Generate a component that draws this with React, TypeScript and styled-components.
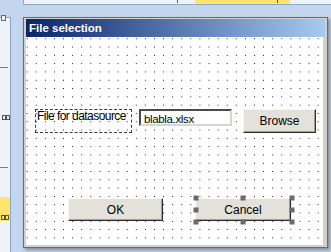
import React from "react";
import styled, { createGlobalStyle } from "styled-components";

const Global = createGlobalStyle`
  html, body { margin: 0; padding: 0; overflow: hidden; }
  body { font-family: "Liberation Sans", Arial, sans-serif; background: #c4d6ee; }
`;

const Page = styled.div`
  width: 331px;
  height: 252px;
  display: grid;
  grid-template-columns: 11px 12px 305px 3px;
  grid-template-rows: 5px 12px 231px 4px;
  background: #c4d6ee;
`;

const TopStrip = styled.div`
  grid-column: 3 / 5;
  grid-row: 1;
  box-sizing: border-box;
  background: #eef3fa;
  border-left: 1px solid #8ea6ca;
  border-bottom: 1px solid #8ea6ca;
  display: flex;
  align-items: stretch;
`;

const Tick = styled.div<{ $ml: number }>`
  width: 1px;
  height: 3px;
  margin-left: ${(p) => p.$ml}px;
  background: #5a5a5a;
`;

const YellowTab = styled.div`
  width: 95px;
  margin-left: 17px;
  background: #ffe46e;
  display: flex;
`;

const LeftStrip = styled.div`
  grid-column: 1;
  grid-row: 3 / 5;
  position: relative;
  box-sizing: border-box;
  background: #eef3fa;
  border-top: 1px solid #8ea6ca;
  border-right: 1px solid #8ea6ca;
  display: flex;
  flex-direction: column;
`;

const TopMarker = styled.div`
  position: absolute;
  left: 1px;
  top: -3px;
  width: 3px;
  height: 4px;
  border: 1px solid #6a6a6a;
  background: #eef3fa;
`;

const Rule = styled.div<{ $mt: number }>`
  margin-top: ${(p) => p.$mt}px;
  width: 8px;
  height: 1px;
  background: #6f7f98;
`;

const GlyphRow = styled.div<{ $mt: number }>`
  margin-top: ${(p) => p.$mt}px;
  padding-left: 2px;
  height: 5px;
  display: flex;
`;

const YellowBlock = styled.div`
  margin-top: 29px;
  height: 24px;
  background: #ffe46e;
  display: flex;
  align-items: flex-end;
  padding: 0 0 1px 1px;
  box-sizing: border-box;
`;

const Window = styled.div`
  grid-column: 3;
  grid-row: 3;
  box-sizing: border-box;
  border: 1px solid #6b6b6b;
  padding: 1px 2px 2px 2px;
  background: #d4d0c8;
  box-shadow: 2px 2px 3px rgba(0, 0, 0, 0.35);
  display: flex;
  flex-direction: column;
`;

const TitleBar = styled.div`
  height: 18px;
  flex: none;
  background: linear-gradient(to right, #0a246a, #a6caf0);
  color: #fff;
  font-weight: bold;
  font-size: 11.5px;
  line-height: 18px;
  padding-left: 3px;
  white-space: nowrap;
`;

const Canvas = styled.div`
  flex: 1;
  box-sizing: border-box;
  background-color: #ffffff;
  background-image: radial-gradient(circle at 0.5px 0.5px, #000 0.55px, transparent 0.7px);
  background-size: 9.1px 8.3px;
  background-position: 0.7px 1.3px;
  border-right: 2px solid #d4d0c8;
  padding: 72px 0 0 9px;
  display: flex;
  flex-direction: column;
`;

const Row = styled.div<{ $mt?: number; $pl?: number; $gap: number }>`
  display: flex;
  align-items: flex-start;
  margin-top: ${(p) => p.$mt ?? 0}px;
  padding-left: ${(p) => p.$pl ?? 0}px;
  column-gap: ${(p) => p.$gap}px;
`;

const Label = styled.div`
  box-sizing: border-box;
  width: 97px;
  height: 24px;
  border: 1px dashed #3a3a3a;
  padding: 0 0 0 1px;
  font-size: 12px;
  line-height: 13px;
  letter-spacing: -0.55px;
  color: #000;
  white-space: nowrap;
`;

const TextBox = styled.div`
  box-sizing: border-box;
  width: 93px;
  height: 17px;
  margin-right: 4px;
  background: #fff;
  border-top: 2px solid #4a4a4a;
  border-left: 2px solid #4a4a4a;
  border-right: 2px solid #d8d6d0;
  border-bottom: 2px solid #d8d6d0;
  padding: 2px 0 0 3px;
  font-size: 11.5px;
  line-height: 12px;
  letter-spacing: -0.35px;
  color: #000;
  white-space: nowrap;
  overflow: hidden;
`;

const Button = styled.div<{ $w: number; $h: number }>`
  box-sizing: border-box;
  width: ${(p) => p.$w}px;
  height: ${(p) => p.$h}px;
  background: #e2e1da;
  border-top: 1px solid #f8f8f4;
  border-left: 1px solid #f8f8f4;
  border-right: 1px solid #2e2e2e;
  border-bottom: 1px solid #2e2e2e;
  box-shadow: inset -1px -1px 0 #a09f98;
  display: flex;
  align-items: center;
  justify-content: center;
  font-size: 12px;
  color: #000;
`;

const Selected = styled.div`
  position: relative;
`;

const Handle = styled.div<{ $x: string; $y: string }>`
  position: absolute;
  width: 5px;
  height: 5px;
  background: #6a6a6a;
  left: ${(p) => p.$x};
  top: ${(p) => p.$y};
  transform: translate(-50%, -50%);
`;

const Glyph = () => (
  <svg width="8" height="5" viewBox="0 0 8 5">
    <rect x="0.5" y="0.5" width="3" height="4" fill="none" stroke="#555" />
    <rect x="4.5" y="0.5" width="3" height="4" fill="none" stroke="#555" />
  </svg>
);

export default function App() {
  const handles: Array<[string, string]> = [
    ["0.5px", "0px"],
    ["50%", "0px"],
    ["calc(100% + 1px)", "0px"],
    ["0.5px", "50%"],
    ["calc(100% + 1px)", "50%"],
    ["0.5px", "calc(100% + 0.5px)"],
    ["50%", "calc(100% + 0.5px)"],
    ["calc(100% + 1px)", "calc(100% + 0.5px)"],
  ];
  return (
    <>
      <Global />
      <Page>
        <TopStrip>
          <Tick $ml={153} />
          <YellowTab>
            <Tick $ml={82} />
          </YellowTab>
        </TopStrip>
        <LeftStrip>
          <TopMarker />
          <Rule $mt={49} />
          <GlyphRow $mt={47}>
            <Glyph />
          </GlyphRow>
          <Rule $mt={47} />
          <YellowBlock>
            <Glyph />
          </YellowBlock>
        </LeftStrip>
        <Window>
          <TitleBar>File selection</TitleBar>
          <Canvas>
            <Row $gap={7}>
              <Label>File for datasource</Label>
              <TextBox>blabla.xlsx</TextBox>
              <Button $w={73} $h={24}>Browse</Button>
            </Row>
            <Row $mt={65} $pl={33} $gap={32}>
              <Button $w={95} $h={23}>OK</Button>
              <Selected>
                <Button $w={96} $h={23}>Cancel</Button>
                {handles.map(([x, y], i) => (
                  <Handle key={i} $x={x} $y={y} />
                ))}
              </Selected>
            </Row>
          </Canvas>
        </Window>
      </Page>
    </>
  );
}
